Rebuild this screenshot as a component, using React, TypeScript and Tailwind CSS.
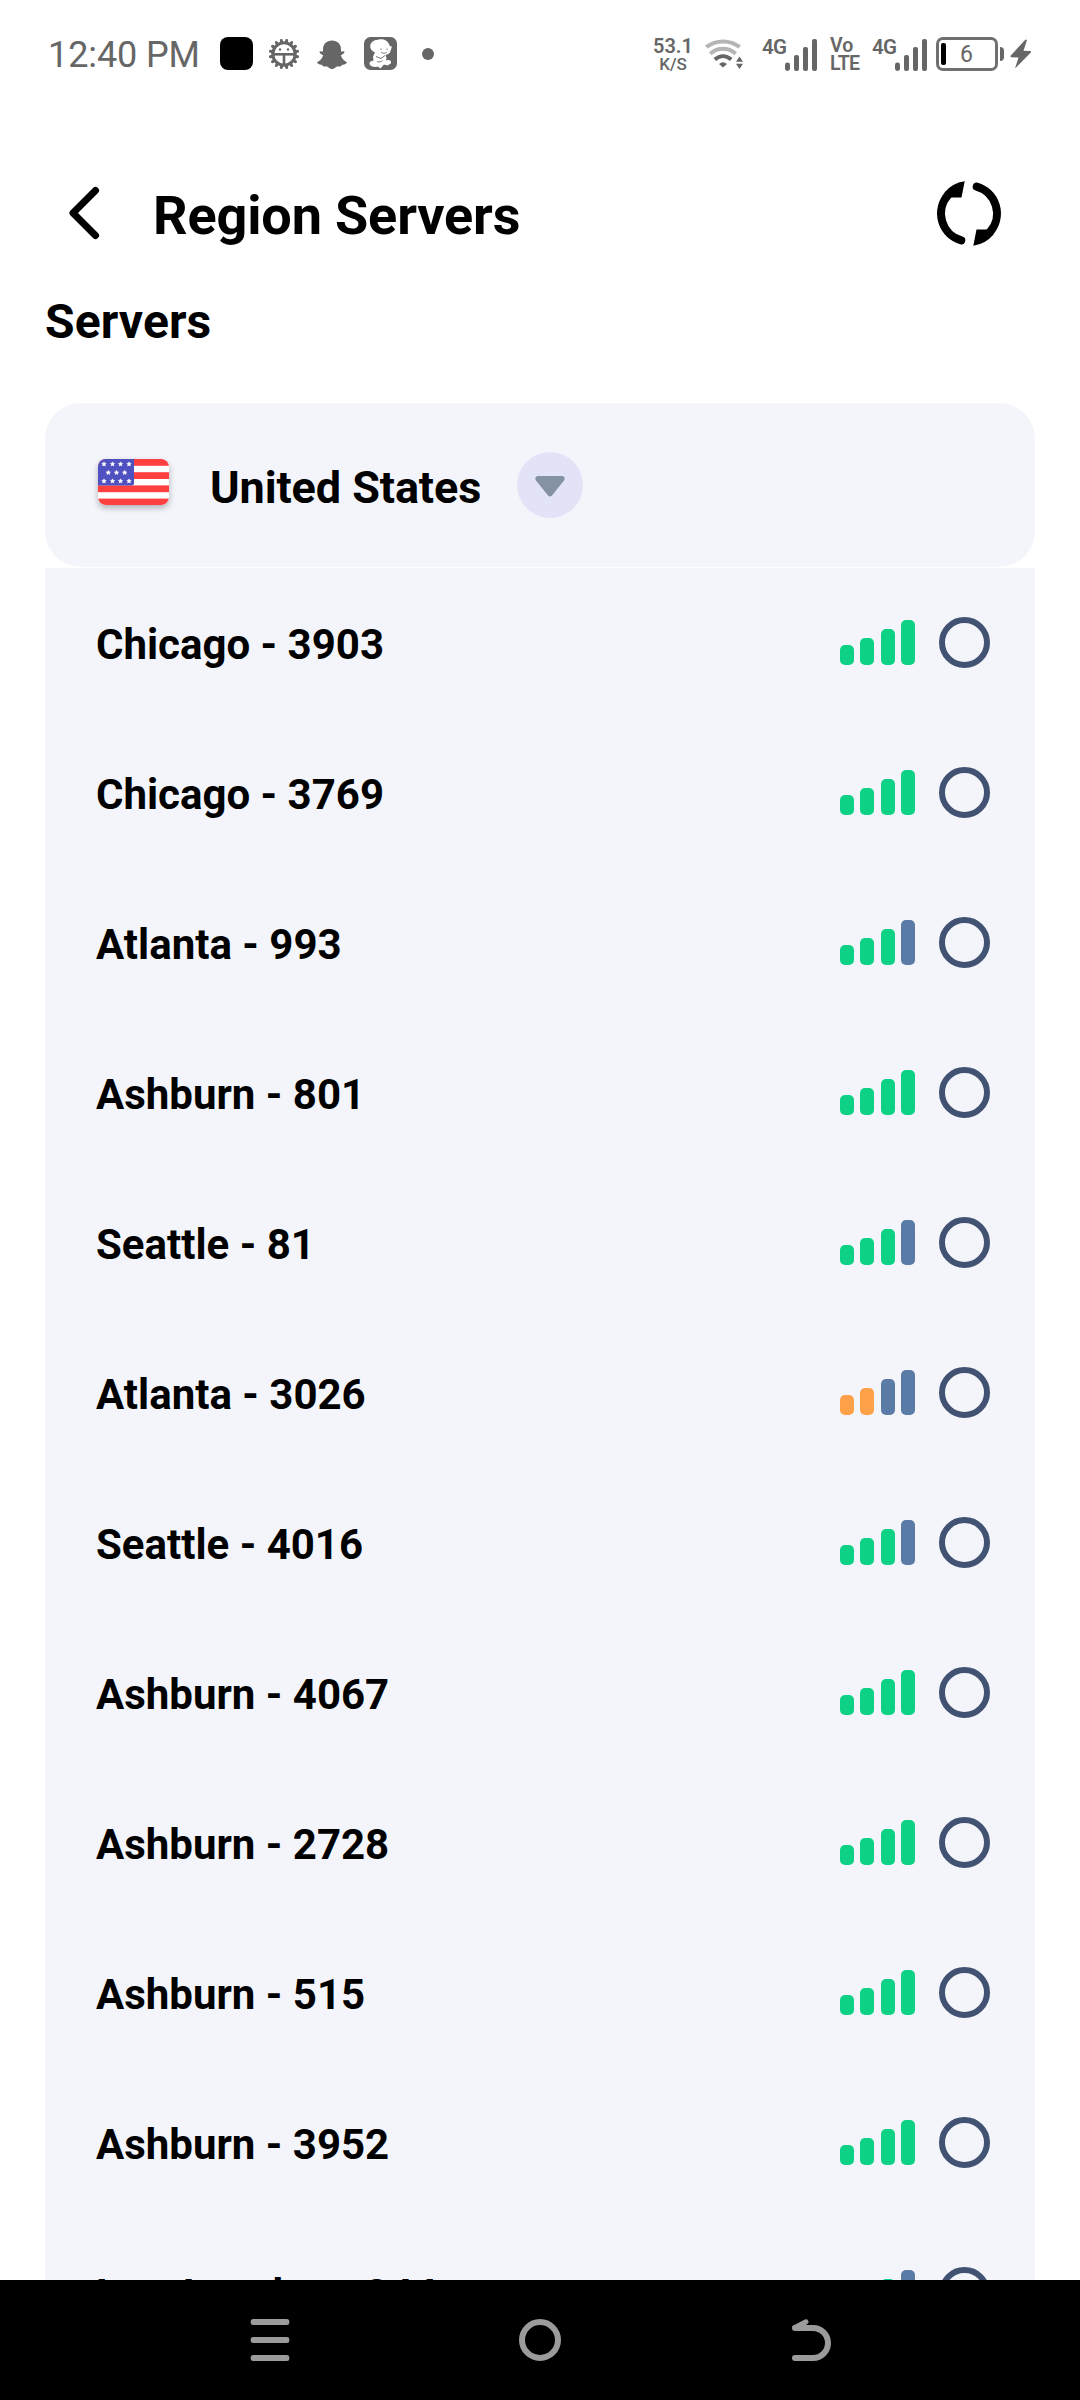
import React from "react";

const GRAY = "#666666";

type Level = "good" | "fair" | "weak";

const servers: { name: string; level: Level }[] = [
  { name: "Chicago - 3903", level: "good" },
  { name: "Chicago - 3769", level: "good" },
  { name: "Atlanta - 993", level: "fair" },
  { name: "Ashburn - 801", level: "good" },
  { name: "Seattle - 81", level: "fair" },
  { name: "Atlanta - 3026", level: "weak" },
  { name: "Seattle - 4016", level: "fair" },
  { name: "Ashburn - 4067", level: "good" },
  { name: "Ashburn - 2728", level: "good" },
  { name: "Ashburn - 515", level: "good" },
  { name: "Ashburn - 3952", level: "good" },
  { name: "Los Angeles - 344", level: "fair" },
];

const barColors: Record<Level, string[]> = {
  good: ["bg-[#0dd185]", "bg-[#0dd185]", "bg-[#0dd185]", "bg-[#0dd185]"],
  fair: ["bg-[#0dd185]", "bg-[#0dd185]", "bg-[#0dd185]", "bg-[#5b7ba7]"],
  weak: ["bg-[#ffa149]", "bg-[#ffa149]", "bg-[#5b7ba7]", "bg-[#5b7ba7]"],
};

const barHeights = ["h-5", "h-[27px]", "h-9", "h-[45px]"];

function SignalBars({ level }: { level: Level }) {
  return (
    <div className="flex h-[45px] w-[75px] items-end justify-between">
      {barHeights.map((h, i) => (
        <span key={h} className={`w-[14px] rounded-[5px] ${h} ${barColors[level][i]}`} />
      ))}
    </div>
  );
}

function CellBars() {
  return (
    <svg width="32" height="32" viewBox="0 0 32 32" fill={GRAY} className="mt-px">
      <rect x="0" y="23.5" width="5" height="8.5" rx="2.4" />
      <rect x="9" y="16" width="5" height="16" rx="2" />
      <rect x="18" y="8" width="5" height="24" rx="2" />
      <rect x="27" y="0" width="5" height="32" rx="2" />
    </svg>
  );
}

function GearIcon() {
  return (
    <svg width="32" height="32" viewBox="-16 -16 32 32" fill="none" stroke={GRAY}>
      {Array.from({ length: 16 }, (_, i) => (
        <path key={i} d="M0 -12V-13.800" strokeWidth="3" strokeLinecap="round" transform={`rotate(${i * 22.5 + 11.25})`} />
      ))}
      <circle r="11.200" strokeWidth="3" />
      <path d="M-11 0.3H11" strokeWidth="2.6" />
      <path d="M0 0V11" strokeWidth="2.6" />
      <circle cx="-4" cy="-4.5" r="1.2" fill={GRAY} stroke="none" />
      <circle cx="4" cy="-4.5" r="1.2" fill={GRAY} stroke="none" />
    </svg>
  );
}

function GhostIcon() {
  return (
    <svg width="30" height="30" viewBox="0 0 30 30" fill={GRAY}>
      <path d="M15 0.5C20.5 0.5 24 4 24 9.500V11.500L27.500 11.200C27.500 13.200 26 14.200 23.800 15.200C24.800 18.500 27 20.800 30 22.200C29 24.200 27 24.600 25 24.800C24.300 27 22 26.400 20 26.600C18.200 27.500 17 29.200 15 29.200C13 29.200 11.800 27.500 10 26.600C8 26.400 5.700 27 5 24.800C3 24.600 1 24.200 0 22.200C3 20.800 5.200 18.500 6.200 15.200C4 14.200 2.500 13.200 2.500 11.200L6 11.500V9.500C6 4 9.500 0.500 15 0.500Z" />
    </svg>
  );
}

function BabyIcon() {
  return (
    <svg width="33" height="33" viewBox="0 0 33 33">
      <rect width="33" height="33" rx="6.500" fill={GRAY} />
      <path
        fill="#fff"
        d="M15 2.500C20 1.500 24.500 4 25.500 8.500L27.500 10.500L26 15.500C24.500 17 23 17.500 21.500 18L22.500 21L22 23.500C25 22 28 24 26.800 26.500L23.500 28.500C21.500 27.800 20.500 27.500 19.500 28L16.500 31.500L14 29.800C10.500 30 7 30 5.800 27.500C4.800 25 7 24 9.500 23.500L9 19.500L11 15.500C7 13.500 5.500 10.500 6.500 7.500C8 4 11 2.800 15 2.500Z"
      />
      <path
        d="M17 11.500V13M23 11.500V12.800M17 15C19 17 21.500 16.500 23 15M12 19.500L17 21.500L21 18.500M13 24.500C15 25.500 17 25 18.500 23.500"
        fill="none"
        stroke={GRAY}
        strokeWidth="0.900"
      />
      <path d="M26.500 12.500L27 9" fill="none" stroke="#fff" strokeWidth="1.200" />
    </svg>
  );
}

function WifiIcon() {
  return (
    <svg width="38" height="31" viewBox="0 0 38 31" fill="none" strokeWidth="4">
      <path d="M1.300 8C11 0.500 25 0.500 34.700 8" stroke="#b5b5b5" />
      <path d="M5.300 14.800C13 8.200 23 8.200 30.700 14.800" stroke="#b5b5b5" />
      <path d="M9.800 20.500C15 16 21 16 26.200 20.500" stroke={GRAY} />
      <path d="M14 25Q18 21.500 22 25L18 28.500Z" fill={GRAY} stroke="none" />
      <path d="M34.500 17.500L38 22.800H31ZM34.500 30L31 24.800H38Z" fill={GRAY} stroke="none" />
    </svg>
  );
}

function Battery() {
  return (
    <div className="flex items-center">
      <div className="flex h-[34px] w-[62px] items-center rounded-[7px] border-[3px] border-[#707070] pl-[2px]">
        <span className="h-[22px] w-[5px] rounded-[2px] bg-black" />
        <span className="ml-[14px] text-[23px] leading-none">6</span>
      </div>
      <span className="ml-[2px] h-[14px] w-1 rounded-r-[4px] bg-[#666666]" />
    </div>
  );
}

function StatusBar() {
  return (
    <div className="flex h-[107px] shrink-0 items-center pr-[48px] pl-[48px] text-[#666666]">
      <span className="mt-[3px] w-[172px] text-[36px] leading-none tracking-[-0.1px] whitespace-nowrap">12:40 PM</span>
      <span className="h-[33px] w-[33px] rounded-[8px] bg-black" />
      <span className="ml-[15px]"><GearIcon /></span>
      <span className="ml-[17px] pt-[2px]"><GhostIcon /></span>
      <span className="ml-[17px]"><BabyIcon /></span>
      <span className="ml-[25px] h-3 w-3 rounded-full bg-[#666666]" />
      <div className="ml-auto flex items-center pt-px font-semibold">
        <div className="flex w-[40px] flex-col items-center leading-none">
          <span className="text-[20px] leading-[20px]">53.1</span>
          <span className="text-[17px] leading-[17px] font-medium">K/S</span>
        </div>
        <span className="ml-[12px]"><WifiIcon /></span>
        <span className="-mt-[13px] ml-[19px] w-[24px] text-[20.5px] leading-none tracking-[-0.6px]">4G</span>
        <span className="-ml-px"><CellBars /></span>
        <div className="mt-[2px] ml-[13px] flex w-[41px] flex-col text-[19.5px] leading-[18px]">
          <span>Vo</span>
          <span className="tracking-[-0.6px]">LTE</span>
        </div>
        <span className="-mt-[13px] ml-px w-[24px] text-[20.5px] leading-none tracking-[-0.6px]">4G</span>
        <span className="-ml-px"><CellBars /></span>
        <span className="ml-[9px] font-normal"><Battery /></span>
        <svg width="22" height="30" viewBox="0 0 22 30" fill={GRAY} className="ml-[6px]">
          <path d="M15.500 0.500L0.800 16.500Q0 18 1.500 18.200L8.500 18.500L5 29.500L20.800 13.500Q21.500 12 20 12L13.500 11.800L17 1Z" />
        </svg>
      </div>
    </div>
  );
}

function RefreshIcon() {
  const half = (
    <>
      <path d="M31.300 66.400A28 28 0 0 1 18 21" fill="none" stroke="#000" strokeWidth="8" strokeLinecap="round" />
      <path d="M34.700 7.300A32 32 0 0 0 14.500 18.500L19 25L21.500 23.500H31.500Z" />
    </>
  );
  return (
    <svg width="78" height="79" viewBox="0 0 78 79">
      {half}
      <g transform="rotate(180 39 39.5)">{half}</g>
    </svg>
  );
}

function Flag() {
  const star = "M0 -2.200L0.700 -0.700L2.200 -0.600L1.100 0.500L1.400 2L0 1.200L-1.400 2L-1.100 0.500L-2.200 -0.600L-0.700 -0.700Z";
  const stars = [
    ...[6, 14.500, 22.500, 31].map((x) => [x, 5]),
    ...[10.300, 18.500, 26.700].map((x) => [x, 13.500]),
    ...[6, 14.500, 22.500, 31].map((x) => [x, 22]),
  ];
  return (
    <div className="h-[46px] w-[71px] overflow-hidden rounded-[8px] shadow-[0_3px_6px_rgba(0,0,0,0.28)]">
      <svg width="71" height="46" viewBox="0 0 71 46">
        <rect width="71" height="46" fill="#fff" />
        {[0, 1, 2, 3].map((i) => (
          <rect key={i} y={i * 13.200} width="71" height="6.800" fill="#ff4040" />
        ))}
        <path d="M0 0H36V24.500Q36 26.500 34 26.500H0Z" fill="#4e51bf" />
        {stars.map(([x, y]) => (
          <path key={`${x}-${y}`} d={star} fill="#fff" stroke="#fff" strokeWidth="0.500" transform={`translate(${x} ${y})`} />
        ))}
      </svg>
    </div>
  );
}

export default function App() {
  return (
    <div className="flex h-[2400px] w-[1080px] flex-col overflow-hidden bg-white font-['Roboto',sans-serif] text-black">
      <StatusBar />
      <header className="mt-[28px] flex h-[156px] shrink-0 items-center pr-[72px] pl-[66px]">
        <svg width="36" height="58" viewBox="0 0 36 58" fill="none" stroke="#000" strokeWidth="7" strokeLinecap="round" strokeLinejoin="round">
          <path d="M29.500 6.500L7 29L29.500 51.500" />
        </svg>
        <h1 className="mt-[5px] ml-[51px] text-[54px] leading-none font-bold tracking-[-0.15px]">Region Servers</h1>
        <span className="ml-auto"><RefreshIcon /></span>
      </header>
      <h2 className="ml-[45px] h-[112px] shrink-0 pt-[7px] text-[48px] leading-[48px] font-bold tracking-[0.1px]">Servers</h2>

      <main className="mx-[45px] flex min-h-0 flex-1 flex-col overflow-hidden">
        <div className="flex h-[164px] shrink-0 items-center rounded-[36px] bg-[#f4f5fb] pl-[53px]">
          <span className="mb-[6px]"><Flag /></span>
          <span className="mt-1 ml-[41px] w-[307px] text-[45px] leading-none font-bold tracking-[-0.1px] whitespace-nowrap">United States</span>
          <span className="flex h-[66px] w-[66px] items-center justify-center rounded-full bg-[#e3e3f7]">
            <svg width="32" height="24" viewBox="0 0 32 24" className="mt-1" fill="#8492a4">
              <path d="M3.500 1H28.500Q32 2 30 5.500L18 20.500Q16 22.500 14 20.500L2 5.500Q0 2 3.500 1Z" />
            </svg>
          </span>
        </div>
        <ul className="mt-px shrink-0 bg-[#f4f5fb]">
          {servers.map((s) => (
            <li key={s.name} className="flex h-[150px] items-center pr-[45px] pl-[51px]">
              <span className="mt-[3px] text-[42px] leading-none font-[680]">{s.name}</span>
              <span className="mb-[2px] ml-auto"><SignalBars level={s.level} /></span>
              <span className="mb-[2px] ml-6 h-[51px] w-[51px] rounded-full border-[6px] border-[#425273]" />
            </li>
          ))}
        </ul>
      </main>

      <nav className="flex h-[120px] shrink-0 items-center justify-between bg-black px-[249px]">
        <svg width="42" height="42" viewBox="0 0 42 42" fill="#9b9b9b">
          <rect x="1.700" width="38.600" height="6" rx="2.500" />
          <rect x="1.700" y="18" width="38.600" height="6" rx="2.500" />
          <rect x="1.700" y="36" width="38.600" height="6" rx="2.500" />
        </svg>
        <span className="h-[42px] w-[42px] rounded-full border-[6px] border-[#9b9b9b]" />
        <svg width="42" height="42" viewBox="0 0 42 42" fill="none" stroke="#9b9b9b" strokeWidth="6" strokeLinecap="round" strokeLinejoin="round">
          <path d="M6 39H24A15 15 0 0 0 24 9H6" />
          <path d="M6 9L17.500 3V9Z" fill="#9b9b9b" stroke="none" />
          <path d="M6 8.500L17 2.800" strokeWidth="5" />
        </svg>
      </nav>
    </div>
  );
}
